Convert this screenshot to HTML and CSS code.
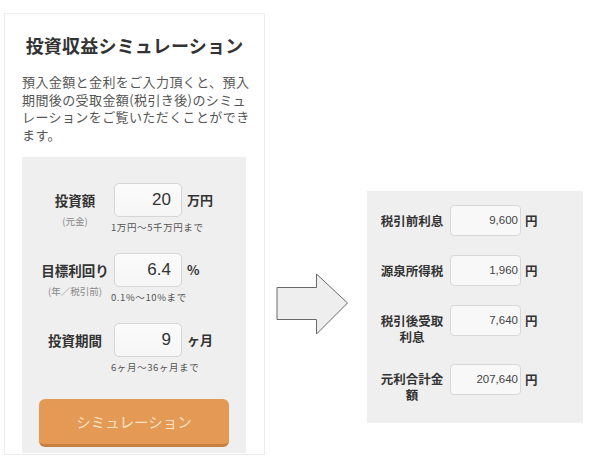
FILE: index.html
```html
<!DOCTYPE html>
<html lang="ja">
<head>
<meta charset="utf-8">
<title>投資収益シミュレーション</title>
<link rel="stylesheet" href="styles.css">
</head>
<body>
<div class="page">
  <section class="card">
    <h1 class="title">投資収益シミュレーション</h1>
    <p class="desc">預入金額と金利をご入力頂くと、預入<br>期間後の受取金額(税引き後)のシミュ<br>レーションをご覧いただくことができ<br>ます。</p>
    <div class="form">
      <div class="field">
        <div class="lcol"><div class="label">投資額</div><div class="sub">(元金)</div></div>
        <div class="icol"><div class="input">20</div><div class="hint">1万円～5千万円まで</div></div>
        <div class="unit">万円</div>
      </div>
      <div class="field">
        <div class="lcol"><div class="label">目標利回り</div><div class="sub">(年／税引前)</div></div>
        <div class="icol"><div class="input">6.4</div><div class="hint">0.1%～10%まで</div></div>
        <div class="unit">%</div>
      </div>
      <div class="field">
        <div class="lcol"><div class="label">投資期間</div></div>
        <div class="icol"><div class="input">9</div><div class="hint">6ヶ月～36ヶ月まで</div></div>
        <div class="unit">ヶ月</div>
      </div>
      <div class="button">シミュレーション</div>
    </div>
  </section>

  <div class="arrow">
    <svg width="74" height="64" viewBox="0 0 74 64">
      <polygon points="1,14.5 40.5,14.5 40.5,1 71.5,30 40.5,61 40.5,46.5 1,46.5" fill="#eeeeee" stroke="#6a6a6a" stroke-width="1"/>
    </svg>
  </div>

  <section class="result">
    <div class="rrow">
      <div class="rlabel">税引前利息</div>
      <div class="rinput">9,600</div>
      <div class="runit">円</div>
    </div>
    <div class="rrow">
      <div class="rlabel">源泉所得税</div>
      <div class="rinput">1,960</div>
      <div class="runit">円</div>
    </div>
    <div class="rrow">
      <div class="rlabel">税引後受取利息</div>
      <div class="rinput">7,640</div>
      <div class="runit">円</div>
    </div>
    <div class="rrow">
      <div class="rlabel">元利合計金額</div>
      <div class="rinput">207,640</div>
      <div class="runit">円</div>
    </div>
  </section>
</div>
</body>
</html>
```

FILE: styles.css
```css
html, body {
  margin: 0;
  padding: 0;
  background: #ffffff;
}
body {
  font-family: "Noto Sans CJK JP", "Liberation Sans", sans-serif;
  color: #333;
}
.page {
  display: flex;
  align-items: flex-start;
  padding: 13px 0 0 4px;
  width: 600px;
  height: 459px;
  box-sizing: border-box;
  overflow: hidden;
}
.card {
  flex: 0 0 auto;
  width: 261px;
  height: 442px;
  box-sizing: border-box;
  border: 1px solid #ececec;
  padding: 18px 17px 0 17px;
}
.title {
  margin: 0;
  font-size: 18px;
  line-height: 26px;
  font-weight: bold;
  text-align: center;
  letter-spacing: 0.2px;
  color: #333;
}
.desc {
  margin: 15px 0 0 0;
  font-size: 13px;
  line-height: 17.5px;
  letter-spacing: 0.4px;
  color: #555;
  white-space: nowrap;
}
.form {
  margin-top: 14px;
  width: 224px;
  height: 296px;
  box-sizing: border-box;
  background: #efefef;
  padding: 26px 16px 0 16px;
}
.field {
  display: flex;
  align-items: flex-start;
}
.field + .field {
  margin-top: 20px;
}
.lcol {
  flex: 0 0 74px;
  width: 74px;
  text-align: center;
  white-space: nowrap;
}
.label {
  font-size: 13.5px;
  font-weight: bold;
  line-height: 34px;
  color: #333;
}
.sub {
  font-size: 9.5px;
  line-height: 12px;
  margin-top: -2px;
  color: #888;
}
.icol {
  flex: 0 0 68px;
  width: 68px;
  margin-left: 2px;
}
.input {
  width: 68px;
  height: 34px;
  box-sizing: border-box;
  border: 1px solid #d6d6d6;
  border-radius: 5px;
  background: linear-gradient(#fbfbfb, #f6f6f6);
  text-align: right;
  padding-right: 10px;
  font-family: "Liberation Sans", sans-serif;
  font-size: 17px;
  line-height: 32px;
  color: #333;
}
.hint {
  margin: 4px 0 0 -3px;
  font-size: 9.5px;
  line-height: 12px;
  letter-spacing: 0.6px;
  color: #555;
  white-space: nowrap;
}
.unit {
  flex: 0 0 auto;
  margin-left: 5px;
  font-size: 13px;
  font-weight: bold;
  line-height: 34px;
  color: #333;
  white-space: nowrap;
}
.button {
  margin: 26px auto 0 auto;
  width: 190px;
  height: 48px;
  box-sizing: border-box;
  border-radius: 6px;
  background: #e49a55;
  border-bottom: 3px solid #c77f42;
  color: #fce3c6;
  font-size: 14.5px;
  line-height: 45px;
  text-align: center;
}
.arrow {
  flex: 0 0 auto;
  margin: 260px 0 0 11px;
  width: 74px;
  height: 64px;
}
.arrow svg {
  display: block;
}
.result {
  flex: 0 0 auto;
  margin: 178px 0 0 17px;
  width: 216px;
  height: 232px;
  box-sizing: border-box;
  background: #efefef;
  padding: 14px 13px 0 13px;
}
.rrow {
  display: flex;
  align-items: flex-start;
}
.rrow + .rrow {
  margin-top: 19px;
}
.rlabel {
  flex: 0 0 64px;
  width: 64px;
  padding-top: 7.5px;
  font-size: 12.5px;
  font-weight: bold;
  line-height: 16px;
  text-align: center;
  color: #333;
}
.rinput {
  flex: 0 0 71px;
  margin-left: 6px;
  width: 71px;
  height: 31px;
  box-sizing: border-box;
  border: 1px solid #d8d8d8;
  border-radius: 4px;
  background: #f8f8f8;
  text-align: right;
  padding-right: 2px;
  font-family: "Liberation Sans", sans-serif;
  font-size: 11.5px;
  line-height: 29px;
  color: #444;
}
.runit {
  flex: 0 0 auto;
  margin-left: 4px;
  font-size: 12.5px;
  font-weight: bold;
  line-height: 31px;
  color: #333;
}
```
